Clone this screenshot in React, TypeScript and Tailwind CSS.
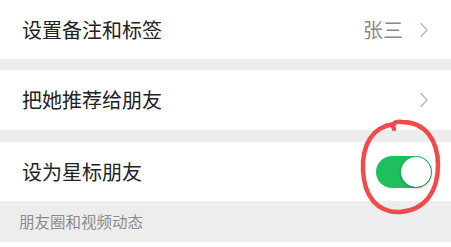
import React from "react";

const font = { fontFamily: '"Noto Sans CJK SC", "Noto Sans", sans-serif' };

function Chevron() {
  return (
    <svg className="ml-[17px] h-[16px] w-[8px]" viewBox="0 0 8 16" fill="none">
      <path d="M1 1.5 L7 8 L1 14.5" stroke="#b8b8b8" strokeWidth={1.4} strokeLinecap="round" strokeLinejoin="round" />
    </svg>
  );
}

function Toggle() {
  return (
    <div className="flex h-[32px] w-[56px] items-center justify-end rounded-full bg-[#1fbf5f] p-[1px]">
      <div className="h-[30px] w-[30px] rounded-full bg-white shadow-[0_1px_3px_rgba(0,0,0,0.35)]" />
    </div>
  );
}

function Row({
  label,
  children,
  height,
}: {
  label: string;
  children?: React.ReactNode;
  height: string;
}) {
  return (
    <div className={`flex items-center justify-between bg-white pl-[22px] pr-[23px] ${height}`}>
      <span className="text-[20px] leading-none text-[#222222]">{label}</span>
      <div className="flex items-center">{children}</div>
    </div>
  );
}

export default function App() {
  return (
    <div className="relative h-[247px] w-[451px] overflow-hidden bg-white" style={font}>
      <Row label="设置备注和标签" height="h-[59px]">
        <span className="text-[20px] leading-none text-[#8a8a8a]">张三</span>
        <Chevron />
      </Row>
      <div className="h-[11px] bg-[#ededed]" />
      <Row label="把她推荐给朋友" height="h-[60px]">
        <Chevron />
      </Row>
      <div className="h-[12px] bg-[#ededed]" />
      <Row label="设为星标朋友" height="h-[59px]">
        <div className="mr-[-4px]">
          <Toggle />
        </div>
      </Row>
      <div className="flex h-[41px] items-center bg-[#ededed] pl-[19px]">
        <span className="text-[15.5px] leading-none text-[#8c8c8c]">朋友圈和视频动态</span>
      </div>

      {/* hand-drawn red mark */}
      <svg className="pointer-events-none absolute left-0 top-0 h-[247px] w-[451px]" viewBox="0 0 451 247" fill="none">
        <path
          d="M394 129 C391 123 396 121 402 122 C425 122 438 140 438 165 C438 192 425 210 400 212 C378 213 364 197 363 170 C362 145 372 127 394 124"
          stroke="#f24a4a"
          strokeWidth={4.5}
          strokeLinecap="round"
          strokeLinejoin="round"
        />
      </svg>
    </div>
  );
}
